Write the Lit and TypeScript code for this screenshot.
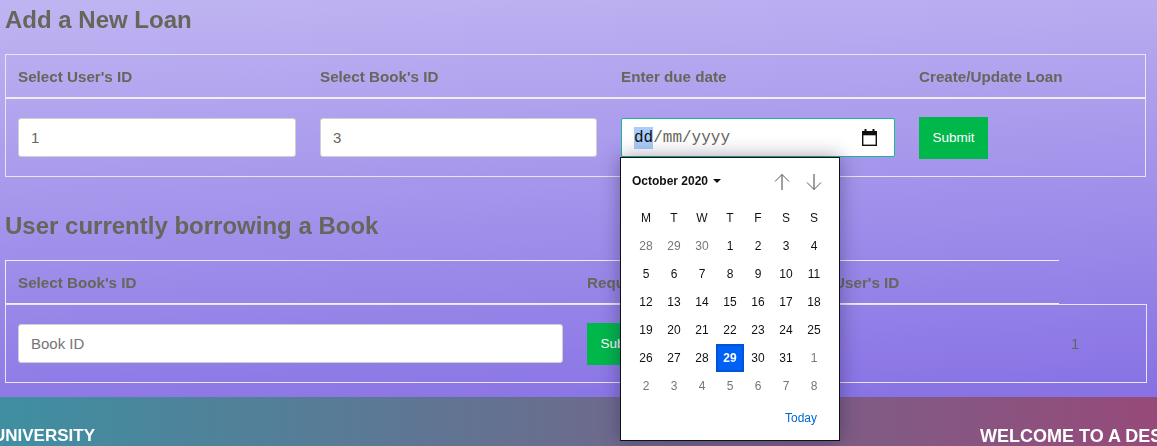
import { LitElement, html, css, svg } from "lit";
import { customElement } from "lit/decorators.js";

const calendarDays: { d: number; muted?: boolean; sel?: boolean }[] = [
  { d: 28, muted: true }, { d: 29, muted: true }, { d: 30, muted: true },
  ...Array.from({ length: 31 }, (_, i) => ({ d: i + 1, sel: i + 1 === 29 })),
  ...Array.from({ length: 8 }, (_, i) => ({ d: i + 1, muted: true })),
];

const arrow = (down: boolean) => html`<svg class="arrow" width="18" height="18" viewBox="0 0 18 18" fill="none">
  ${down
    ? svg`<path d="M9 1V16.5" stroke="#777" stroke-width="1.4"/><path d="M2 9.5L9 16.5L16 9.5" stroke="#555" stroke-width="1"/>`
    : svg`<path d="M9 17V1.5" stroke="#777" stroke-width="1.4"/><path d="M2 8.5L9 1.5L16 8.5" stroke="#555" stroke-width="1"/>`}
</svg>`;

@customElement("app-root")
export class AppRoot extends LitElement {
  static styles = css`
    :host {
      display: block;
      width: 1157px;
      height: 446px;
      overflow: hidden;
      font-family: "Liberation Sans", Arial, sans-serif;
      color: #66665a;
    }
    main {
      height: 397px;
      box-sizing: border-box;
      padding: 6px 11px 0 5px;
      background: linear-gradient(177deg, #c0b5f2 0%, #8771e4 100%);
    }
    h2 {
      margin: 0 0 20px;
      font-size: 24px;
      line-height: 28px;
      font-weight: 700;
      color: #66665a;
      will-change: transform;
    }
    h2.second { margin-top: 35px; }
    .loan { border: 1px solid #e8e6ee; height: 123px; box-sizing: border-box; }
    .row-loan {
      display: grid;
      grid-template-columns: 302px 301px 298px 1fr;
    }
    .head {
      height: 44px;
      box-sizing: border-box;
      border-bottom: 2px solid #efedf5;
      align-items: center;
    }
    .label {
      padding-left: 12px;
      font-size: 15.2px;
      font-weight: 700;
      color: #66665a;
      white-space: nowrap;
      will-change: transform;
    }
    .body { height: 77px; align-items: center; }
    .cell { padding-left: 12px; position: relative; }
    .input {
      box-sizing: border-box;
      height: 39px;
      border: 1px solid #cfcfcf;
      border-radius: 3px;
      background: #fff;
      padding: 0 12px;
      font-size: 15px;
      display: flex;
      align-items: center;
      color: #66665a;
    }
    .w1 { width: 278px; }
    .w2 { width: 277px; }
    .placeholder { color: #757575; }
    .date {
      width: 274px;
      border: 1px solid #17b89a;
      border-radius: 2px;
      font-family: "Liberation Mono", "Courier New", monospace;
      font-size: 16px;
      padding: 0 17px 0 12px;
      justify-content: space-between;
    }
    .date .sel { background: #a9cdf8; color: #111; padding: 2px 0; }
    .submit {
      display: flex;
      align-items: center;
      justify-content: center;
      width: 69px;
      height: 42px;
      background: #00b74a;
      color: #fff;
      font-size: 13.5px;
    }
    .popup {
      position: absolute;
      left: 11px;
      top: 39px;
      width: 220px;
      height: 284px;
      box-sizing: border-box;
      background: #fff;
      border: 1px solid #111;
      box-shadow: 0 0 18px rgba(40, 30, 80, 0.45);
      padding: 0 11px;
      color: #111;
      z-index: 2;
    }
    .pop-head {
      height: 46px;
      display: flex;
      align-items: center;
      font-size: 12px;
      font-weight: 700;
      will-change: transform;
    }
    .caret {
      width: 0;
      height: 0;
      margin-left: 5px;
      border: 4px solid transparent;
      border-top-color: #111;
      border-bottom: 0;
    }
    .arrows { margin: 2px 5px 0 auto; display: flex; gap: 14px; }
    .arrow { display: block; }
    .grid {
      display: grid;
      grid-template-columns: repeat(7, 28px);
      grid-auto-rows: 28px;
      font-size: 12px;
      will-change: transform;
    }
    .grid span { display: flex; align-items: center; justify-content: center; }
    .grid .muted { color: #767676; }
    .grid .picked {
      box-sizing: border-box;
      background: #0062f5;
      border: 2px solid #0054d8;
      color: #fff;
      font-weight: 700;
    }
    .today {
      height: 36px;
      display: flex;
      align-items: center;
      justify-content: flex-end;
      padding-right: 11px;
      font-size: 12px;
      color: #0067d6;
      will-change: transform;
    }
    .borrow-head {
      width: 1054px;
      height: 45px;
      box-sizing: border-box;
      border-top: 1px solid #efedf5;
      border-left: 1px solid #efedf5;
      border-bottom: 2px solid #efedf5;
      display: grid;
      grid-template-columns: 569px 200px 1fr;
      align-items: center;
    }
    .borrow-head .label:last-child { padding-left: 0; }
    .borrow-body {
      box-sizing: border-box;
      margin-top: -1px;
      width: 1142px;
      height: 79px;
      border: 1px solid #e8e6ee;
      display: grid;
      grid-template-columns: 569px 1fr 75px;
      align-items: center;
    }
    .w3 { width: 545px; }
    .value { font-size: 15px; will-change: transform; }
    footer {
      height: 49px;
      display: flex;
      justify-content: space-between;
      align-items: flex-end;
      overflow: hidden;
      box-sizing: border-box;
      background: linear-gradient(90deg, #3f8fa1 0%, #964a7a 100%);
      color: #fff;
      font-weight: 700;
      white-space: nowrap;
    }
    footer .a { margin-left: -7px; font-size: 17px; will-change: transform; }
    footer .b { width: 177px; overflow: hidden; font-size: 18px; line-height: 20px; will-change: transform; }
  `;

  render() {
    return html`
      <main>
        <h2>Add a New Loan</h2>
        <div class="loan">
          <div class="row-loan head">
            <div class="label">Select User's ID</div>
            <div class="label">Select Book's ID</div>
            <div class="label">Enter due date</div>
            <div class="label">Create/Update Loan</div>
          </div>
          <div class="row-loan body">
            <div class="cell"><div class="input w1">1</div></div>
            <div class="cell"><div class="input w2">3</div></div>
            <div class="cell">
              <div class="input date">
                <div><span class="sel">dd</span>/mm/yyyy</div>
                <svg width="15" height="18" viewBox="0 0 15 18" fill="none">
                  <path d="M3.5 0V3M11.5 0V3" stroke="#111" stroke-width="2"/>
                  <rect x="0.7" y="2.7" width="13.6" height="13.6" stroke="#111" stroke-width="1.4"/>
                  <rect x="0.7" y="2.7" width="13.6" height="3.6" fill="#111"/>
                </svg>
              </div>
              <div class="popup">
                <div class="pop-head">
                  <span>October 2020</span><span class="caret"></span>
                  <div class="arrows">${arrow(false)}${arrow(true)}</div>
                </div>
                <div class="grid">
                  ${["M", "T", "W", "T", "F", "S", "S"].map((d) => html`<span>${d}</span>`)}
                  ${calendarDays.map(
                    (c) => html`<span class="${c.muted ? "muted" : c.sel ? "picked" : ""}">${c.d}</span>`
                  )}
                </div>
                <div class="today">Today</div>
              </div>
            </div>
            <div class="cell"><div class="submit">Submit</div></div>
          </div>
        </div>
        <h2 class="second">User currently borrowing a Book</h2>
        <div class="borrow-head">
          <div class="label">Select Book's ID</div>
          <div class="label">Request</div>
          <div class="label">Current User's ID</div>
        </div>
        <div class="borrow-body">
          <div class="cell"><div class="input w3 placeholder">Book ID</div></div>
          <div class="cell"><div class="submit">Submit</div></div>
          <div class="value">1</div>
        </div>
      </main>
      <footer>
        <span class="a">UNIVERSITY</span>
        <span class="b">WELCOME TO A DESIGN UNIVERSITY</span>
      </footer>
    `;
  }
}
